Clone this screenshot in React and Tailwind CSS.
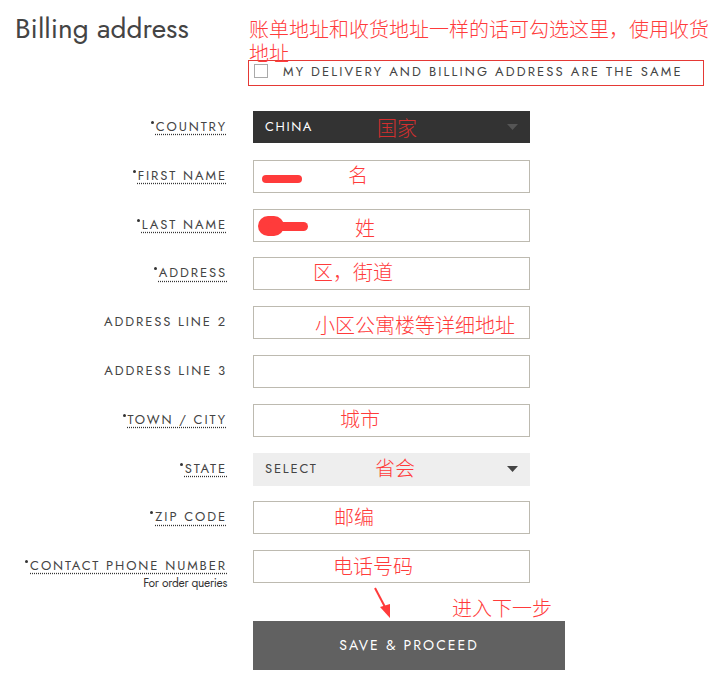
import React from 'react';

const font = { fontFamily: '"Jost", "Lato", "Liberation Sans", sans-serif' };

const Label = ({ text, required, sub }) => (
  <div className="flex flex-col items-end">
    <div className="text-[13px] tracking-[1.9px] text-[#444] leading-none flex items-start">
      {required && <span className="w-[3px] h-[3px] rounded-full bg-[#333] mt-[1px] mr-[2px]" />}
      <span className={required ? 'underline decoration-dotted decoration-[#333] underline-offset-[3px]' : ''}>{text}</span>
    </div>
    {sub && <div className="text-[12px] text-[#333] mt-[5px] leading-none tracking-[-0.3px]">{sub}</div>}
  </div>
);

const Note = ({ children, className }) => (
  <div className={`absolute text-[#ff3b3b] text-[20px] leading-none whitespace-nowrap font-light ${className}`} style={{ fontFamily: '"Noto Sans CJK SC", sans-serif' }}>
    {children}
  </div>
);

const Row = ({ label, required, sub, children }) => (
  <div className="grid grid-cols-[227px_277px] gap-x-[26px] items-start h-[48.8px]">
    <div className="pt-[9px]">
      <Label text={label} required={required} sub={sub} />
    </div>
    {children}
  </div>
);

const Input = () => <div className="h-[33px] border border-[#bdbab0] bg-white" />;

const Caret = ({ color }) => (
  <svg width="11" height="6" viewBox="0 0 11 6"><path d="M0 0h11L5.5 6z" fill={color} /></svg>
);

export default function App() {
  return (
    <div className="relative w-[716px] h-[681px] bg-white overflow-hidden" style={font}>
      <div className="h-[111px]">
        <h2 className="pl-[15px] pt-[15px] text-[28px] text-[#444] leading-none">Billing address</h2>
        <div className="ml-[254px] mt-[21px] flex items-center gap-[15px]">
          <div className="w-[14px] h-[14px] border border-[#aaa] bg-white" />
          <span className="text-[13px] tracking-[2.1px] text-[#444] leading-none">MY DELIVERY AND BILLING ADDRESS ARE THE SAME</span>
        </div>
      </div>

      <Row label="COUNTRY" required>
        <div className="h-[32px] bg-[#333] flex items-center justify-between px-[12px]">
          <span className="text-white text-[13px] tracking-[1.6px]">CHINA</span>
          <Caret color="#555" />
        </div>
      </Row>
      <Row label="FIRST NAME" required>
        <div className="relative h-[33px] border border-[#bdbab0]">
          <div className="absolute left-[8px] top-[14px] w-[40px] h-[8px] rounded-full bg-[#ff3b3b]" />
        </div>
      </Row>
      <Row label="LAST NAME" required>
        <div className="relative h-[33px] border border-[#bdbab0]">
          <div className="absolute left-[4px] top-[6px] w-[26px] h-[20px] rounded-full bg-[#ff3b3b]" />
          <div className="absolute left-[14px] top-[12px] w-[40px] h-[9px] rounded-full bg-[#ff3b3b]" />
        </div>
      </Row>
      <Row label="ADDRESS" required><Input /></Row>
      <Row label="ADDRESS LINE 2"><Input /></Row>
      <Row label="ADDRESS LINE 3"><Input /></Row>
      <Row label="TOWN / CITY" required><Input /></Row>
      <Row label="STATE" required>
        <div className="h-[33px] bg-[#eee] flex items-center justify-between px-[12px]">
          <span className="text-[#444] text-[13px] tracking-[1.8px]">SELECT</span>
          <Caret color="#444" />
        </div>
      </Row>
      <Row label="ZIP CODE" required><Input /></Row>
      <Row label="CONTACT PHONE NUMBER" required sub="For order queries"><Input /></Row>

      <div className="ml-[253px] mt-[22px]">
        <button className="w-[312px] h-[49px] bg-[#616161] text-white text-[14px] tracking-[2px]">SAVE &amp; PROCEED</button>
      </div>

      {/* annotations */}
      <div className="absolute left-[248px] top-[60px] w-[456px] h-[26px] border border-[#e53935]" />
      <Note className="left-[249px] top-[19px]">账单地址和收货地址一样的话可勾选这里，使用收货</Note>
      <Note className="left-[249px] top-[43px]">地址</Note>
      <Note className="left-[377px] top-[118px] !text-[#d32f2f]">国家</Note>
      <Note className="left-[348px] top-[165px]">名</Note>
      <Note className="left-[355px] top-[218px]">姓</Note>
      <Note className="left-[313px] top-[262px]">区，街道</Note>
      <Note className="left-[315px] top-[315px]">小区公寓楼等详细地址</Note>
      <Note className="left-[340px] top-[409px]">城市</Note>
      <Note className="left-[375px] top-[458px]">省会</Note>
      <Note className="left-[334px] top-[507px]">邮编</Note>
      <Note className="left-[333px] top-[556px]">电话号码</Note>
      <Note className="left-[452px] top-[598px]">进入下一步</Note>
      <svg className="absolute left-[370px] top-[585px]" width="26" height="36" viewBox="0 0 26 36">
        <path d="M5 3 L15 22" stroke="#ff3b3b" strokeWidth="2" />
        <path d="M10 22 L20 19 L20 33 Z" fill="#ff3b3b" />
      </svg>
    </div>
  );
}
